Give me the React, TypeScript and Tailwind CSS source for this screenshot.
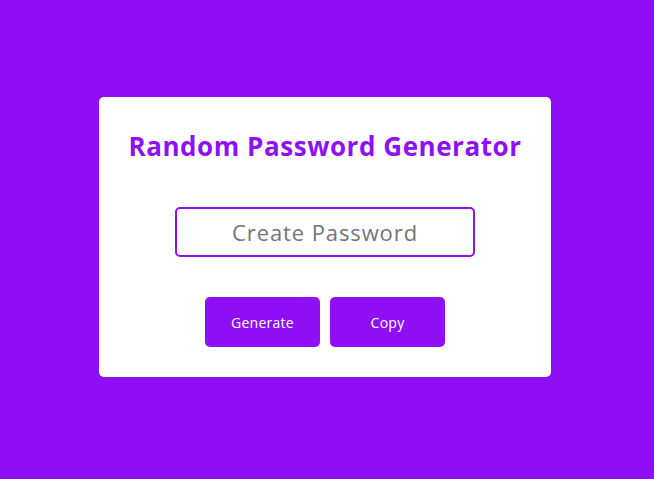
export default function App() {
  return (
    <div className="min-h-screen w-full bg-[#8f0ff6] flex items-center justify-center pr-[4px] pb-[5px] font-['Open_Sans',sans-serif]">
      <div className="w-[452px] bg-white rounded-[5px] flex flex-col items-center pt-[30px] pb-[30px]">
        <h1 className="h-[39px] flex items-center text-[26px] font-bold text-[#8f0ff6] tracking-[0.55px]">
          Random Password Generator
        </h1>
        <input
          type="text"
          placeholder="Create Password"
          className="mt-[41px] w-[300px] h-[50px] rounded-[5px] border-2 border-[#8f0ff6] text-center text-[22px] tracking-[0.9px] outline-none placeholder:text-[#757575]"
        />
        <div className="mt-[40px] flex gap-[10px]">
          <button className="w-[115px] h-[50px] rounded-[5px] bg-[#8f0ff6] text-white text-[14px] tracking-[0.25px]">
            Generate
          </button>
          <button className="w-[115px] h-[50px] rounded-[5px] bg-[#8f0ff6] text-white text-[14px] tracking-[0.25px]">
            Copy
          </button>
        </div>
      </div>
    </div>
  );
}
